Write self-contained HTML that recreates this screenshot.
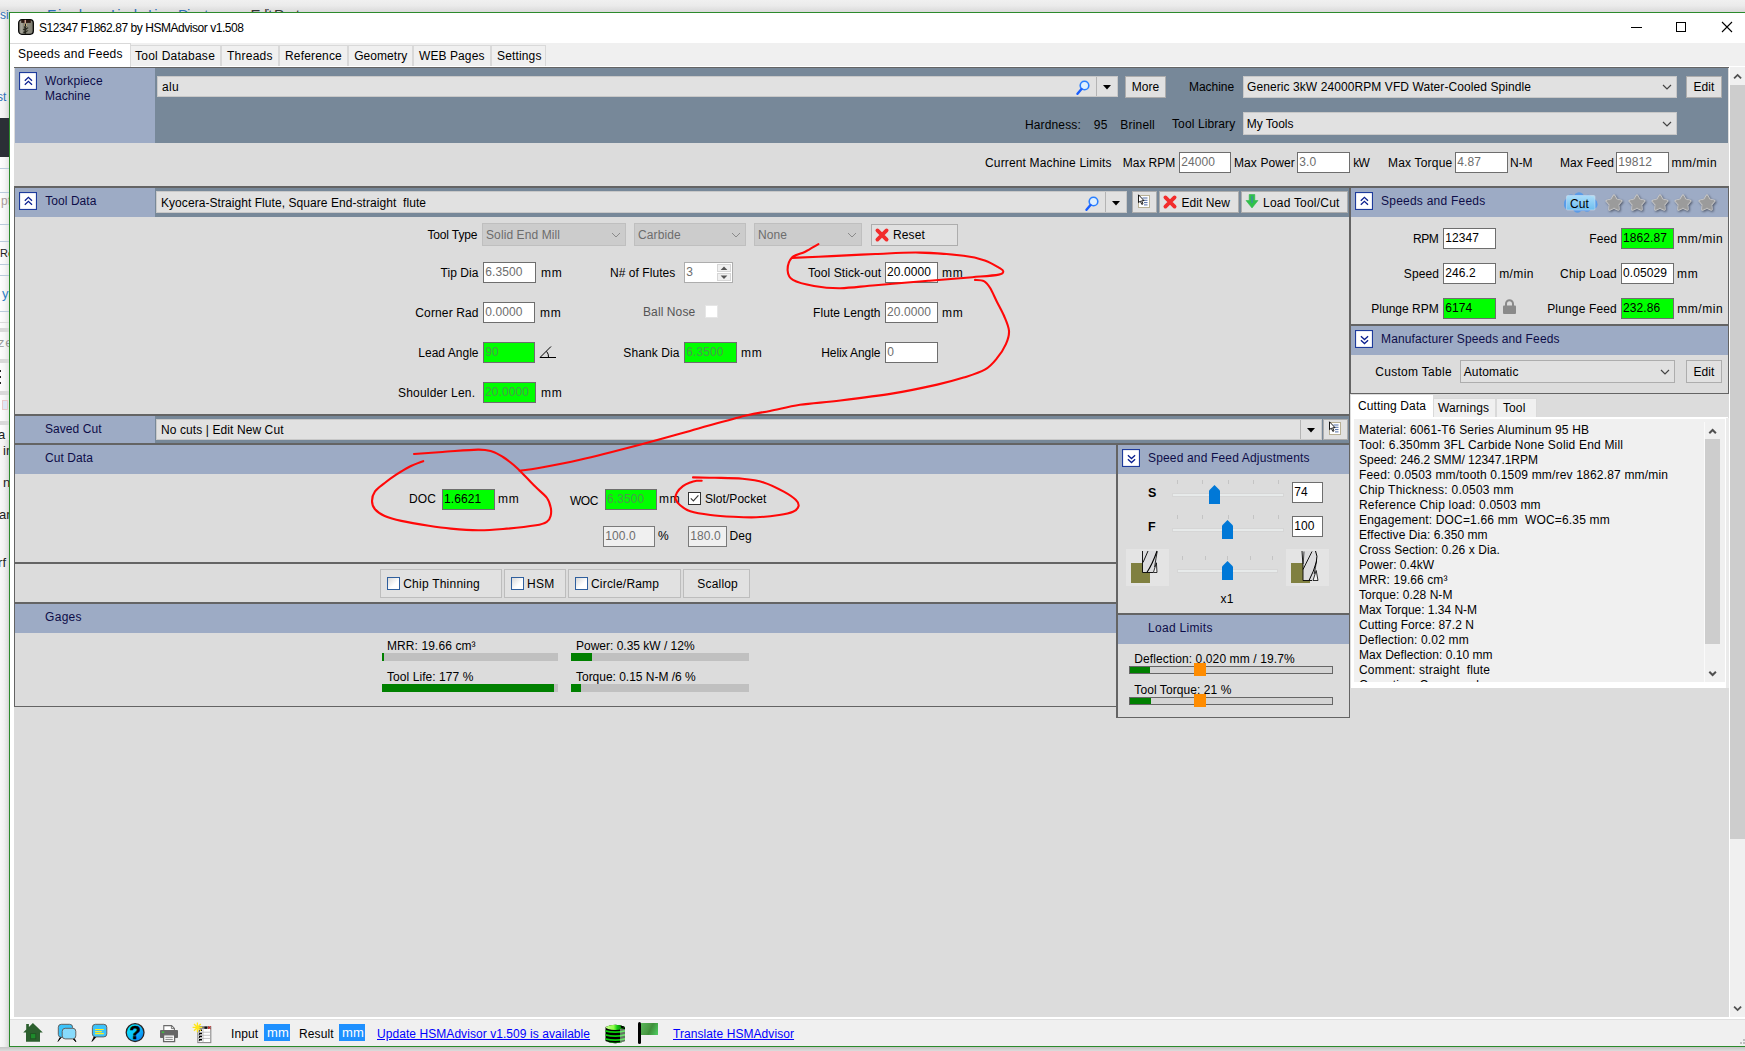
<!DOCTYPE html>
<html><head><meta charset="utf-8"><title>S12347 F1862.87 by HSMAdvisor v1.508</title>
<style>
html,body{margin:0;padding:0;}
body{width:1745px;height:1051px;position:relative;overflow:hidden;background:#fff;
 font-family:"Liberation Sans",Arial,sans-serif;font-size:12px;color:#000;}
.b{position:absolute;display:block;}
.t{position:absolute;white-space:pre;line-height:14px;height:14px;letter-spacing:0.1px;}
.t.r{text-align:right;}
.t.c{text-align:center;}
.nv{color:#0d0d48;}
.gr{color:#6d6d6d;}
.lk{color:#0000ff;text-decoration:underline;}
.bd{font-weight:bold;}
</style></head><body>

<div class="b " style="left:0px;top:0px;width:1745px;height:12px;background:linear-gradient(#f0f0f0 0%,#ebebeb 45%,#dadada 100%);"></div>
<div class="b " style="left:0px;top:12px;width:10px;height:1039px;background:#fff;"></div>
<div class="b " style="left:0px;top:12px;width:9px;height:1039px;background:linear-gradient(90deg,#f7f7f7 0%,#f1f1f1 45%,#e2e2e2 80%,#d2d2d2 100%);"></div>
<div class="b " style="left:0px;top:118px;width:9px;height:39px;background:#2b2f36;"></div>
<div class="b " style="left:0px;top:157px;width:9px;height:283px;background:linear-gradient(90deg,#fdfdfd 0%,#f6f6f6 50%,#e4e4e4 100%);"></div>
<div class="b " style="left:0px;top:168px;width:9px;height:1px;background:#b9cadb;"></div>
<div class="b " style="left:0px;top:192px;width:9px;height:1px;background:#b9cadb;"></div>
<div class="b " style="left:0px;top:224px;width:9px;height:1px;background:#b9cadb;"></div>
<div class="b " style="left:0px;top:241px;width:9px;height:1px;background:#b9cadb;"></div>
<div class="b " style="left:0px;top:264px;width:9px;height:1px;background:#b9cadb;"></div>
<div class="b " style="left:0px;top:275px;width:9px;height:1px;background:#b9cadb;"></div>
<div class="b " style="left:0px;top:311px;width:9px;height:1px;background:#b9cadb;"></div>
<div class="b " style="left:0px;top:322px;width:9px;height:1px;background:#dadada;"></div>
<div class="b " style="left:0px;top:328px;width:9px;height:4px;background:#d9d9d9;"></div>
<div class="b " style="left:0px;top:359px;width:9px;height:4px;background:#d9d9d9;"></div>
<div class="b " style="left:0px;top:391px;width:9px;height:4px;background:#d9d9d9;"></div>
<div class="b " style="left:0px;top:421px;width:9px;height:4px;background:#d9d9d9;"></div>
<div class="b " style="left:0px;top:370px;width:1px;height:2px;background:#222;"></div>
<div class="b " style="left:0px;top:376px;width:1px;height:2px;background:#222;"></div>
<div class="b " style="left:0px;top:382px;width:1px;height:2px;background:#222;"></div>
<div class="b " style="left:2px;top:400px;width:6px;height:10px;background:#dfe6f3;border:1px solid #e9c9c9;box-sizing:border-box;"></div>
<div class="t " style="left:0px;top:7.5px;color:#2f6fb5;">si</div>
<div class="t " style="left:-3px;top:90px;color:#2f6fb5;">st</div>
<div class="t " style="left:1px;top:193.5px;color:#a99;">pt</div>
<div class="t " style="left:0px;top:245.7px;font-size:11px;color:#222;">Re</div>
<div class="t " style="left:2px;top:287.0px;font-size:13px;color:#2f7fc5;">ya</div>
<div class="t " style="left:-3px;top:337.2px;font-size:13px;color:#999;font-family:Liberation Mono,monospace;">ze</div>
<div class="t " style="left:-2px;top:427.5px;font-size:13px;color:#222;">a</div>
<div class="t " style="left:3px;top:443.5px;font-size:13px;color:#222;">ir</div>
<div class="t " style="left:3px;top:475.5px;font-size:13px;color:#222;">n</div>
<div class="t " style="left:-1px;top:507.5px;font-size:13px;color:#222;">ar</div>
<div class="t " style="left:-2px;top:555.5px;font-size:13px;color:#222;">rf</div>
<div class="t " style="left:33px;top:8.2px;font-size:11px;color:#999;">▸</div>
<div class="t " style="left:47px;top:8.0px;font-size:15px;letter-spacing:1.938px;color:#2f6fb5;">Find</div>
<div class="t " style="left:95px;top:8.2px;font-size:11px;color:#999;">▸</div>
<div class="t " style="left:111px;top:8.0px;font-size:15px;letter-spacing:-2.142px;color:#2f6fb5;">Line-by-Line</div>
<div class="t " style="left:178px;top:8.0px;font-size:15px;letter-spacing:-1.752px;color:#2f6fb5;">Directory</div>
<div class="t " style="left:238px;top:8.2px;font-size:11px;color:#999;">▸</div>
<div class="t " style="left:250.5px;top:8.0px;font-size:15px;letter-spacing:-1.316px;color:#333;">Edit Post</div>
<div class="b " style="left:0px;top:1047px;width:1745px;height:4px;background:linear-gradient(#c4c4c4,#dcdcdc);"></div>
<div class="b " style="left:9px;top:12px;width:1736px;height:1035px;background:#fff;border-left:1px solid #2c8a2c;border-top:1px solid #2c8a2c;border-bottom:1px solid #2c8a2c;box-sizing:border-box;"></div>
<svg class="b" style="left:18px;top:19px;" width="16" height="16" viewBox="0 0 16 16"><defs><linearGradient id="ti" x1="0" y1="0" x2="1" y2="0"><stop offset="0" stop-color="#8a897e"/><stop offset="0.22" stop-color="#a9a89d"/><stop offset="0.45" stop-color="#5a5a4e"/><stop offset="0.62" stop-color="#8f8e82"/><stop offset="1" stop-color="#7b7a6e"/></linearGradient></defs><rect x="0.7" y="0.7" width="14.6" height="14.6" rx="3.2" fill="url(#ti)" stroke="#050505" stroke-width="1.3"/><rect x="3.2" y="0.9" width="9.6" height="3" fill="#2a1812"/><rect x="6.6" y="0.9" width="1.3" height="3.6" fill="#e2b4a4"/><rect x="5.9" y="4.6" width="3" height="2.6" fill="#c9b77c"/><rect x="6.8" y="4.8" width="1.2" height="2.2" fill="#15152a"/><path d="M6.3 7.8 L9 9 L6.3 10.4 L9 11.8 L6.3 13.2 L8.6 14.4" stroke="#26261c" stroke-width="1.5" fill="none"/><path d="M8.3 8.2 L8.9 8.8 M8.3 11 L8.9 11.6 M8.3 13.8 L8.9 14.3" stroke="#c9c8b8" stroke-width="1"/></svg>
<div class="t ttl" style="left:39px;top:21px;letter-spacing:-0.452px;">S12347 F1862.87 by HSMAdvisor v1.508</div>
<div class="b " style="left:1631px;top:27px;width:11px;height:1px;background:#000;"></div>
<div class="b " style="left:1676px;top:22px;width:10px;height:10px;border:1px solid #000;box-sizing:border-box;"></div>
<svg class="b" style="left:1721px;top:21px;" width="12" height="12" viewBox="0 0 12 12"><path d="M1 1 L11 11 M11 1 L1 11" stroke="#000" stroke-width="1.1"/></svg>
<div class="b " style="left:10px;top:43px;width:1735px;height:23px;background:#f0f0f0;"></div>
<div class="b " style="left:10px;top:66px;width:1735px;height:1px;background:#fff;"></div>
<div class="b " style="left:130px;top:45px;width:91px;height:21px;background:#f0f0f0;border:1px solid #d9d9d9;border-bottom:none;box-sizing:border-box;"></div>
<div class="t " style="left:135px;top:49px;letter-spacing:0.257px;">Tool Database</div>
<div class="b " style="left:221px;top:45px;width:58px;height:21px;background:#f0f0f0;border:1px solid #d9d9d9;border-bottom:none;box-sizing:border-box;"></div>
<div class="t " style="left:227px;top:49px;letter-spacing:0.245px;">Threads</div>
<div class="b " style="left:279px;top:45px;width:69px;height:21px;background:#f0f0f0;border:1px solid #d9d9d9;border-bottom:none;box-sizing:border-box;"></div>
<div class="t " style="left:285px;top:49px;letter-spacing:0.178px;">Reference</div>
<div class="b " style="left:348px;top:45px;width:65px;height:21px;background:#f0f0f0;border:1px solid #d9d9d9;border-bottom:none;box-sizing:border-box;"></div>
<div class="t " style="left:354.2px;top:49px;letter-spacing:0.045px;">Geometry</div>
<div class="b " style="left:413px;top:45px;width:78px;height:21px;background:#f0f0f0;border:1px solid #d9d9d9;border-bottom:none;box-sizing:border-box;"></div>
<div class="t " style="left:419px;top:49px;letter-spacing:0.087px;">WEB Pages</div>
<div class="b " style="left:491px;top:45px;width:55px;height:21px;background:#f0f0f0;border:1px solid #d9d9d9;border-bottom:none;box-sizing:border-box;"></div>
<div class="t " style="left:497px;top:49px;letter-spacing:0.149px;">Settings</div>
<div class="b " style="left:10px;top:43px;width:121px;height:24px;background:#fff;border-top:1px solid #d9d9d9;border-right:1px solid #d9d9d9;box-sizing:border-box;"></div>
<div class="t " style="left:18px;top:47px;letter-spacing:0.250px;">Speeds and Feeds</div>
<div class="b " style="left:14px;top:67px;width:1715px;height:950px;background:#dcdcdc;"></div>
<div class="b " style="left:1729px;top:67px;width:16px;height:950px;background:#f0f0f0;border-left:1px solid #fff;box-sizing:border-box;"></div>
<div class="b " style="left:1730px;top:85px;width:15px;height:754px;background:#cdcdcd;"></div>
<svg class="b" style="left:1732px;top:72px;" width="11" height="8" viewBox="0 0 11 8"><path d="M2.1 6.4 L5.6 2.9 L9.1 6.4" fill="none" stroke="#505050" stroke-width="1.8"/></svg>
<svg class="b" style="left:1732px;top:1005px;" width="11" height="8" viewBox="0 0 11 8"><path d="M2.1 1.6 L5.6 5.1 L9.1 1.6" fill="none" stroke="#505050" stroke-width="1.8"/></svg>
<div class="b " style="left:14px;top:67px;width:1715px;height:1px;background:#646464;"></div>
<div class="b " style="left:15px;top:68px;width:140px;height:75px;background:#9dabc5;"></div>
<div class="b " style="left:155px;top:68px;width:1573px;height:75px;background:#778899;"></div>
<svg class="b" style="left:19px;top:72px;" width="18" height="18" viewBox="0 0 18 18"><rect x="0.5" y="0.5" width="17" height="17" fill="#fff" stroke="#1d3b9c" stroke-width="1.2"/><path d="M5.8 8.7 L9.4 5.3 L13 8.7 M5.8 12.8 L9.4 9.4 L13 12.8" fill="none" stroke="#0a1f8f" stroke-width="1.3"/></svg>
<div class="t nv" style="left:45px;top:74px;letter-spacing:0.154px;">Workpiece</div>
<div class="t nv" style="left:45px;top:89px;letter-spacing:0.007px;">Machine</div>
<div class="b " style="left:157px;top:76px;width:961px;height:21px;background:#e1e1e1;border:1px solid #c8c8c8;box-sizing:border-box;"></div>
<div class="t " style="left:162.1px;top:80px;letter-spacing:0.242px;">alu</div>
<div class="b " style="left:1096px;top:77px;width:1px;height:19px;background:#b4b4b4;"></div>
<svg class="b" style="left:1076px;top:80px;" width="14" height="15" viewBox="0 0 14 15"><circle cx="8.5" cy="5.5" r="4.3" fill="#dff0ff" stroke="#2a7fff" stroke-width="1.6"/><path d="M5.5 9 L1.5 13.8" stroke="#1a5fff" stroke-width="2.4" stroke-linecap="round"/></svg>
<svg class="b" style="left:1103px;top:85px;" width="8" height="5" viewBox="0 0 8 5"><path d="M0 0 L8 0 L4 4.5 Z" fill="#000"/></svg>
<div class="b " style="left:1125px;top:76px;width:41px;height:22px;background:#e1e1e1;border:1px solid #adadad;box-sizing:border-box;"></div>
<div class="t c " style="left:1045.5px;width:200px;top:80px;">More</div>
<div class="t " style="left:1189px;top:80px;letter-spacing:-0.027px;">Machine</div>
<div class="b " style="left:1243px;top:76px;width:434px;height:22px;background:#e1e1e1;border:1px solid #c8c8c8;box-sizing:border-box;"></div>
<div class="t " style="left:1247px;top:80px;letter-spacing:0.083px;">Generic 3kW 24000RPM VFD Water-Cooled Spindle</div>
<svg class="b" style="left:1662.0px;top:84.0px;" width="10" height="6" viewBox="0 0 10 6"><path d="M1 1 L5.0 5 L9 1" fill="none" stroke="#444" stroke-width="1.2"/></svg>
<div class="b " style="left:1686px;top:76px;width:36px;height:22px;background:#e1e1e1;border:1px solid #adadad;box-sizing:border-box;"></div>
<div class="t c " style="left:1604.0px;width:200px;top:80px;">Edit</div>
<div class="t " style="left:1025px;top:118px;letter-spacing:0.137px;">Hardness:</div>
<div class="t " style="left:1093.7px;top:118px;letter-spacing:0.441px;">95</div>
<div class="t " style="left:1120.3px;top:118px;letter-spacing:0.190px;">Brinell</div>
<div class="t " style="left:1172px;top:117px;letter-spacing:0.106px;">Tool Library</div>
<div class="b " style="left:1243px;top:112px;width:434px;height:23px;background:#e1e1e1;border:1px solid #c8c8c8;box-sizing:border-box;"></div>
<div class="t " style="left:1246.8px;top:117px;letter-spacing:-0.077px;">My Tools</div>
<svg class="b" style="left:1662.0px;top:121.0px;" width="10" height="6" viewBox="0 0 10 6"><path d="M1 1 L5.0 5 L9 1" fill="none" stroke="#444" stroke-width="1.2"/></svg>
<div class="t " style="left:985px;top:156px;letter-spacing:0.149px;">Current Machine Limits</div>
<div class="t " style="left:1122.8px;top:156px;letter-spacing:-0.045px;">Max RPM</div>
<div class="b " style="left:1179px;top:152px;width:52px;height:21px;background:#fff;border:1px solid #6e6e6e;box-sizing:border-box;"></div>
<div class="t " style="left:1181.2px;top:155px;color:#6d6d6d;">24000</div>
<div class="t " style="left:1234px;top:156px;letter-spacing:0.096px;">Max Power</div>
<div class="b " style="left:1297px;top:152px;width:53px;height:21px;background:#fff;border:1px solid #6e6e6e;box-sizing:border-box;"></div>
<div class="t " style="left:1299.2px;top:155px;color:#6d6d6d;">3.0</div>
<div class="t " style="left:1353.3px;top:156px;letter-spacing:-0.828px;">kW</div>
<div class="t " style="left:1388px;top:156px;letter-spacing:0.191px;">Max Torque</div>
<div class="b " style="left:1455px;top:152px;width:53px;height:21px;background:#fff;border:1px solid #6e6e6e;box-sizing:border-box;"></div>
<div class="t " style="left:1457.2px;top:155px;color:#6d6d6d;">4.87</div>
<div class="t " style="left:1510px;top:156px;letter-spacing:-0.036px;">N-M</div>
<div class="t " style="left:1560px;top:156px;letter-spacing:0.092px;">Max Feed</div>
<div class="b " style="left:1616px;top:152px;width:53px;height:21px;background:#fff;border:1px solid #6e6e6e;box-sizing:border-box;"></div>
<div class="t " style="left:1618.2px;top:155px;color:#6d6d6d;">19812</div>
<div class="t " style="left:1671.4px;top:156px;letter-spacing:0.526px;">mm/min</div>
<div class="b " style="left:14px;top:186px;width:1715px;height:2px;background:#646464;"></div>
<div class="b " style="left:14px;top:188px;width:1px;height:519px;background:#646464;"></div>
<div class="b " style="left:15px;top:188px;width:140px;height:29px;background:#9dabc5;"></div>
<div class="b " style="left:155px;top:188px;width:1194px;height:29px;background:#778899;"></div>
<svg class="b" style="left:19px;top:192px;" width="18" height="18" viewBox="0 0 18 18"><rect x="0.5" y="0.5" width="17" height="17" fill="#fff" stroke="#1d3b9c" stroke-width="1.2"/><path d="M5.8 8.7 L9.4 5.3 L13 8.7 M5.8 12.8 L9.4 9.4 L13 12.8" fill="none" stroke="#0a1f8f" stroke-width="1.3"/></svg>
<div class="t nv" style="left:45.3px;top:194px;letter-spacing:0.050px;">Tool Data</div>
<div class="b " style="left:156px;top:191px;width:971px;height:22px;background:#e1e1e1;border:1px solid #c8c8c8;box-sizing:border-box;"></div>
<div class="t " style="left:161px;top:196px;letter-spacing:0.058px;">Kyocera-Straight Flute, Square End-straight  flute</div>
<div class="b " style="left:1105px;top:192px;width:1px;height:20px;background:#b4b4b4;"></div>
<svg class="b" style="left:1085px;top:196px;" width="14" height="15" viewBox="0 0 14 15"><circle cx="8.5" cy="5.5" r="4.3" fill="#dff0ff" stroke="#2a7fff" stroke-width="1.6"/><path d="M5.5 9 L1.5 13.8" stroke="#1a5fff" stroke-width="2.4" stroke-linecap="round"/></svg>
<svg class="b" style="left:1112px;top:201px;" width="8" height="5" viewBox="0 0 8 5"><path d="M0 0 L8 0 L4 4.5 Z" fill="#000"/></svg>
<div class="b " style="left:1132px;top:191px;width:25px;height:22px;background:#e1e1e1;border:1px solid #adadad;box-sizing:border-box;"></div>
<svg class="b" style="left:1137px;top:194px;" width="14" height="15" viewBox="0 0 14 15"><rect x="1.5" y="1.5" width="11" height="12" fill="#fff" stroke="#b8b095" stroke-width="1"/><path d="M5.5 4 H10.5 M7 6.3 H10.5 M7 8.6 H10.5 M7 10.9 H10.5" stroke="#3b5b9b" stroke-width="0.9"/><path d="M1.5 0.8 V8.6 L3.3 7.2 L4.8 10.4 L6 9.8 L4.6 6.8 L7 6.6 Z" fill="#fff" stroke="#000" stroke-width="0.9"/></svg>
<div class="b " style="left:1159px;top:191px;width:80px;height:22px;background:#e1e1e1;border:1px solid #adadad;box-sizing:border-box;"></div>
<div class="t " style="left:1181.5px;top:196px;letter-spacing:0.067px;">Edit New</div>
<svg class="b" style="left:1162px;top:194px;" width="16" height="16" viewBox="0 0 16 16"><path d="M3.4 3.4 L12.6 12.6 M12.6 3.4 L3.4 12.6" stroke="#f22c2c" stroke-width="3.8" stroke-linecap="round"/></svg>
<div class="b " style="left:1241px;top:191px;width:107px;height:22px;background:#e1e1e1;border:1px solid #adadad;box-sizing:border-box;"></div>
<div class="t " style="left:1263px;top:196px;letter-spacing:0.213px;">Load Tool/Cut</div>
<svg class="b" style="left:1245px;top:194px;" width="14" height="15" viewBox="0 0 14 15"><path d="M4.2 0.5 H9.8 V6.5 H13 L7 14 L1 6.5 H4.2 Z" fill="#2fc24a" stroke="#36b34f" stroke-width="0.6"/><path d="M6.4 2 H7.6 V9 H6.4 Z" fill="#4b6bd6" opacity="0.75"/></svg>
<div class="b " style="left:1349px;top:188px;width:2px;height:206px;background:#646464;"></div>
<div class="t " style="left:427.4px;top:228px;letter-spacing:-0.132px;">Tool Type</div>
<div class="b " style="left:482px;top:223px;width:144px;height:23px;background:#cccccc;border:1px solid #bfbfbf;box-sizing:border-box;"></div>
<div class="t gr" style="left:486px;top:228px;">Solid End Mill</div>
<svg class="b" style="left:611.0px;top:232.0px;" width="10" height="6" viewBox="0 0 10 6"><path d="M1 1 L5.0 5 L9 1" fill="none" stroke="#8a8a8a" stroke-width="1"/></svg>
<div class="b " style="left:634px;top:223px;width:112px;height:23px;background:#cccccc;border:1px solid #bfbfbf;box-sizing:border-box;"></div>
<div class="t gr" style="left:638px;top:228px;">Carbide</div>
<svg class="b" style="left:731.0px;top:232.0px;" width="10" height="6" viewBox="0 0 10 6"><path d="M1 1 L5.0 5 L9 1" fill="none" stroke="#8a8a8a" stroke-width="1"/></svg>
<div class="b " style="left:754px;top:223px;width:108px;height:23px;background:#cccccc;border:1px solid #bfbfbf;box-sizing:border-box;"></div>
<div class="t gr" style="left:758px;top:228px;">None</div>
<svg class="b" style="left:847.0px;top:232.0px;" width="10" height="6" viewBox="0 0 10 6"><path d="M1 1 L5.0 5 L9 1" fill="none" stroke="#8a8a8a" stroke-width="1"/></svg>
<div class="b " style="left:871px;top:224px;width:87px;height:22px;background:#e1e1e1;border:1px solid #adadad;box-sizing:border-box;background:#e1e1e1;"></div>
<div class="t " style="left:893px;top:228px;">Reset</div>
<svg class="b" style="left:874px;top:227px;" width="16" height="16" viewBox="0 0 16 16"><path d="M3.4 3.4 L12.6 12.6 M12.6 3.4 L3.4 12.6" stroke="#f22c2c" stroke-width="3.8" stroke-linecap="round"/></svg>
<div class="t " style="left:440.5px;top:266px;letter-spacing:0.070px;">Tip Dia</div>
<div class="b " style="left:483px;top:262px;width:53px;height:21px;background:#fff;border:1px solid #6e6e6e;box-sizing:border-box;"></div>
<div class="t " style="left:485.2px;top:265px;color:#6d6d6d;">6.3500</div>
<div class="t " style="left:541px;top:266px;letter-spacing:0.800px;">mm</div>
<div class="t " style="left:610px;top:266px;letter-spacing:0.054px;">N# of Flutes</div>
<div class="b " style="left:684px;top:262px;width:49px;height:21px;background:#fff;border:1px solid #adadad;box-sizing:border-box;"></div>
<div class="t " style="left:686.2px;top:265px;color:#6d6d6d;">3</div>
<div class="b " style="left:717px;top:264px;width:14px;height:8px;background:#f0f0f0;border:1px solid #d6d6d6;box-sizing:border-box;"></div>
<div class="b " style="left:717px;top:273px;width:14px;height:8px;background:#f0f0f0;border:1px solid #d6d6d6;box-sizing:border-box;"></div>
<svg class="b" style="left:720px;top:266px;" width="8" height="5" viewBox="0 0 8 5"><path d="M0.6 4 L4 0.6 L7.4 4 Z" fill="#555"/></svg>
<svg class="b" style="left:720px;top:275px;" width="8" height="5" viewBox="0 0 8 5"><path d="M0.6 0.6 L4 4 L7.4 0.6 Z" fill="#555"/></svg>
<div class="t " style="left:808px;top:266px;letter-spacing:0.075px;">Tool Stick-out</div>
<div class="b " style="left:885px;top:262px;width:53px;height:21px;background:#fff;border:1px solid #6e6e6e;box-sizing:border-box;"></div>
<div class="t " style="left:887px;top:265px;color:#000;">20.0000</div>
<div class="t " style="left:942px;top:266px;letter-spacing:0.800px;">mm</div>
<div class="t " style="left:415.3px;top:306px;letter-spacing:0.130px;">Corner Rad</div>
<div class="b " style="left:483px;top:302px;width:52px;height:21px;background:#fff;border:1px solid #6e6e6e;box-sizing:border-box;"></div>
<div class="t " style="left:485.2px;top:305px;color:#6d6d6d;">0.0000</div>
<div class="t " style="left:540px;top:306px;letter-spacing:0.800px;">mm</div>
<div class="t " style="left:643px;top:305px;color:#555;">Ball Nose</div>
<div class="b " style="left:705px;top:305px;width:13px;height:13px;background:#fff;border:1px solid #e6e6e6;box-sizing:border-box;"></div>
<div class="t " style="left:813px;top:306px;letter-spacing:0.071px;">Flute Length</div>
<div class="b " style="left:885px;top:302px;width:53px;height:21px;background:#fff;border:1px solid #6e6e6e;box-sizing:border-box;"></div>
<div class="t " style="left:887px;top:305px;color:#6d6d6d;">20.0000</div>
<div class="t " style="left:942px;top:306px;letter-spacing:0.800px;">mm</div>
<div class="t " style="left:418.3px;top:346px;letter-spacing:0.015px;">Lead Angle</div>
<div class="b " style="left:483px;top:342px;width:52px;height:21px;background:#00ff00;border:1px solid #6e6e6e;box-sizing:border-box;"></div>
<div class="t " style="left:485.2px;top:345px;color:#4b9b4b;">90</div>
<svg class="b" style="left:539px;top:345px;" width="18" height="14" viewBox="0 0 18 14"><path d="M1 12.5 H17 M1 12.5 L12 1.5" stroke="#000" stroke-width="1" fill="none"/><path d="M9.5 12.5 A8 8 0 0 0 7.6 6.4" stroke="#000" stroke-width="1" fill="none"/></svg>
<div class="t " style="left:623.3px;top:346px;letter-spacing:0.103px;">Shank Dia</div>
<div class="b " style="left:684px;top:342px;width:53px;height:21px;background:#00ff00;border:1px solid #6e6e6e;box-sizing:border-box;"></div>
<div class="t " style="left:686.2px;top:345px;color:#4b9b4b;">6.3500</div>
<div class="t " style="left:741px;top:346px;letter-spacing:0.800px;">mm</div>
<div class="t " style="left:821.2px;top:346px;letter-spacing:-0.075px;">Helix Angle</div>
<div class="b " style="left:885px;top:342px;width:53px;height:21px;background:#fff;border:1px solid #6e6e6e;box-sizing:border-box;"></div>
<div class="t " style="left:887.2px;top:345px;color:#6d6d6d;">0</div>
<div class="t " style="left:398px;top:386px;letter-spacing:0.189px;">Shoulder Len.</div>
<div class="b " style="left:483px;top:382px;width:53px;height:21px;background:#00ff00;border:1px solid #6e6e6e;box-sizing:border-box;"></div>
<div class="t " style="left:485px;top:385px;color:#4b9b4b;">20.0000</div>
<div class="t " style="left:541px;top:386px;letter-spacing:0.800px;">mm</div>
<div class="b " style="left:14px;top:414px;width:1336px;height:2px;background:#646464;"></div>
<div class="b " style="left:15px;top:416px;width:140px;height:27px;background:#9dabc5;"></div>
<div class="b " style="left:155px;top:416px;width:1194px;height:27px;background:#778899;"></div>
<div class="t nv" style="left:45px;top:422px;letter-spacing:0.057px;">Saved Cut</div>
<div class="b " style="left:156px;top:419px;width:1166px;height:21px;background:#e1e1e1;border:1px solid #c8c8c8;box-sizing:border-box;"></div>
<div class="t " style="left:161px;top:423px;letter-spacing:0.095px;">No cuts | Edit New Cut</div>
<div class="b " style="left:1300px;top:420px;width:1px;height:19px;background:#b4b4b4;"></div>
<svg class="b" style="left:1307px;top:428px;" width="8" height="5" viewBox="0 0 8 5"><path d="M0 0 L8 0 L4 4.5 Z" fill="#000"/></svg>
<div class="b " style="left:1323px;top:419px;width:25px;height:21px;background:#e1e1e1;border:1px solid #adadad;box-sizing:border-box;"></div>
<svg class="b" style="left:1328px;top:421px;" width="14" height="15" viewBox="0 0 14 15"><rect x="1.5" y="1.5" width="11" height="12" fill="#fff" stroke="#b8b095" stroke-width="1"/><path d="M5.5 4 H10.5 M7 6.3 H10.5 M7 8.6 H10.5 M7 10.9 H10.5" stroke="#3b5b9b" stroke-width="0.9"/><path d="M1.5 0.8 V8.6 L3.3 7.2 L4.8 10.4 L6 9.8 L4.6 6.8 L7 6.6 Z" fill="#fff" stroke="#000" stroke-width="0.9"/></svg>
<div class="b " style="left:14px;top:443px;width:1336px;height:2px;background:#646464;"></div>
<div class="b " style="left:15px;top:445px;width:1101px;height:29px;background:#9dabc5;"></div>
<div class="t nv" style="left:45px;top:451px;letter-spacing:0.077px;">Cut Data</div>
<div class="t r " style="right:1309px;top:492px;">DOC</div>
<div class="b " style="left:442px;top:489px;width:53px;height:21px;background:#00ff00;border:1px solid #6e6e6e;box-sizing:border-box;"></div>
<div class="t " style="left:444px;top:492px;color:#000;">1.6621</div>
<div class="t " style="left:498px;top:492px;letter-spacing:0.800px;">mm</div>
<div class="t " style="left:570px;top:494px;letter-spacing:-0.514px;">WOC</div>
<div class="b " style="left:605px;top:489px;width:52px;height:21px;background:#00ff00;border:1px solid #6e6e6e;box-sizing:border-box;"></div>
<div class="t " style="left:607px;top:492px;color:#4b9b4b;">6.3500</div>
<div class="t " style="left:659px;top:492px;letter-spacing:0.800px;">mm</div>
<div class="b " style="left:688px;top:492px;width:13px;height:13px;background:#fff;border:1px solid #333;box-sizing:border-box;"></div>
<svg class="b" style="left:689px;top:493px;" width="11" height="11" viewBox="0 0 11 11"><path d="M1.8 5.4 L4.4 8 L9.4 2.4" fill="none" stroke="#3a3a3a" stroke-width="1.15"/></svg>
<div class="t " style="left:705px;top:492px;letter-spacing:0.060px;">Slot/Pocket</div>
<div class="b " style="left:603px;top:526px;width:52px;height:21px;background:#f0f0f0;border:1px solid #7a7a7a;box-sizing:border-box;"></div>
<div class="t " style="left:605.2px;top:529px;color:#6d6d6d;">100.0</div>
<div class="t " style="left:658px;top:529px;">%</div>
<div class="b " style="left:688px;top:526px;width:39px;height:21px;background:#f0f0f0;border:1px solid #7a7a7a;box-sizing:border-box;"></div>
<div class="t " style="left:690.2px;top:529px;color:#6d6d6d;">180.0</div>
<div class="t " style="left:729.5px;top:529px;letter-spacing:0.042px;">Deg</div>
<div class="b " style="left:14px;top:562px;width:1103px;height:2px;background:#646464;"></div>
<div class="b " style="left:380px;top:569px;width:122px;height:29px;background:#e1e1e1;border:1px solid #bdbdbd;box-sizing:border-box;"></div>
<div class="b " style="left:387px;top:577px;width:13px;height:13px;background:linear-gradient(135deg,#d8d8d8,#fff 60%);border:1px solid #2f5f9e;box-sizing:border-box;"></div>
<div class="t " style="left:403.2px;top:577px;letter-spacing:0.231px;">Chip Thinning</div>
<div class="b " style="left:504px;top:569px;width:62px;height:29px;background:#e1e1e1;border:1px solid #bdbdbd;box-sizing:border-box;"></div>
<div class="b " style="left:511px;top:577px;width:13px;height:13px;background:linear-gradient(135deg,#d8d8d8,#fff 60%);border:1px solid #2f5f9e;box-sizing:border-box;"></div>
<div class="t " style="left:527px;top:577px;letter-spacing:0.264px;">HSM</div>
<div class="b " style="left:568px;top:569px;width:113px;height:29px;background:#e1e1e1;border:1px solid #bdbdbd;box-sizing:border-box;"></div>
<div class="b " style="left:575px;top:577px;width:13px;height:13px;background:linear-gradient(135deg,#d8d8d8,#fff 60%);border:1px solid #2f5f9e;box-sizing:border-box;"></div>
<div class="t " style="left:591px;top:577px;letter-spacing:0.198px;">Circle/Ramp</div>
<div class="b " style="left:683px;top:569px;width:67px;height:29px;background:#e1e1e1;border:1px solid #bdbdbd;box-sizing:border-box;"></div>
<div class="t " style="left:697.3px;top:577px;letter-spacing:0.190px;">Scallop</div>
<div class="b " style="left:14px;top:602px;width:1103px;height:2px;background:#646464;"></div>
<div class="b " style="left:15px;top:604px;width:1101px;height:29px;background:#9dabc5;"></div>
<div class="t nv" style="left:45px;top:610px;letter-spacing:0.310px;">Gages</div>
<div class="b " style="left:382px;top:653px;width:176px;height:8px;background:#c0c0c0;"></div>
<div class="b " style="left:382px;top:653px;width:2px;height:8px;background:#008000;"></div>
<div class="t " style="left:387px;top:639px;letter-spacing:0.095px;">MRR: 19.66 cm³</div>
<div class="b " style="left:571px;top:653px;width:178px;height:8px;background:#c0c0c0;"></div>
<div class="b " style="left:571px;top:653px;width:21px;height:8px;background:#008000;"></div>
<div class="t " style="left:576px;top:639px;letter-spacing:-0.006px;">Power: 0.35 kW / 12%</div>
<div class="b " style="left:382px;top:684px;width:176px;height:8px;background:#c0c0c0;"></div>
<div class="b " style="left:382px;top:684px;width:172px;height:8px;background:#008000;"></div>
<div class="t " style="left:387px;top:670px;letter-spacing:0.067px;">Tool Life: 177 %</div>
<div class="b " style="left:571px;top:684px;width:178px;height:8px;background:#c0c0c0;"></div>
<div class="b " style="left:571px;top:684px;width:10px;height:8px;background:#008000;"></div>
<div class="t " style="left:576px;top:670px;letter-spacing:-0.018px;">Torque: 0.15 N-M /6 %</div>
<div class="b " style="left:14px;top:706px;width:1103px;height:1px;background:#646464;"></div>
<div class="b " style="left:1116px;top:445px;width:2px;height:273px;background:#646464;"></div>
<div class="b " style="left:1349px;top:394px;width:1px;height:324px;background:#646464;"></div>
<div class="b " style="left:1118px;top:445px;width:231px;height:29px;background:#9dabc5;"></div>
<svg class="b" style="left:1122px;top:449px;" width="18" height="18" viewBox="0 0 18 18"><rect x="0.5" y="0.5" width="17" height="17" fill="#fff" stroke="#1d3b9c" stroke-width="1.2"/><path d="M5.9 6.3 L9.5 9.6 L13.1 6.3 M5.9 10.3 L9.5 13.6 L13.1 10.3" fill="none" stroke="#0a1f8f" stroke-width="1.3"/></svg>
<div class="t nv" style="left:1148px;top:451px;letter-spacing:0.162px;">Speed and Feed Adjustments</div>
<div class="t " style="left:1148px;top:485.7px;font-weight:bold;font-size:12.5px;">S</div>
<div class="b " style="left:1173px;top:494px;width:110px;height:2px;background:#e7eaea;border:1px solid #d6d6d6;box-sizing:content-box;margin:-1px 0 0 -1px;"></div>
<div class="b " style="left:1177px;top:480px;width:1px;height:4px;background:#c4c4c4;"></div>
<div class="b " style="left:1202px;top:480px;width:1px;height:4px;background:#c4c4c4;"></div>
<div class="b " style="left:1228px;top:480px;width:1px;height:4px;background:#c4c4c4;"></div>
<div class="b " style="left:1253px;top:480px;width:1px;height:4px;background:#c4c4c4;"></div>
<div class="b " style="left:1278px;top:480px;width:1px;height:4px;background:#c4c4c4;"></div>
<svg class="b" style="left:1209px;top:485px;" width="11" height="19" viewBox="0 0 11 19"><path d="M0 5.5 L5.5 0 L11 5.5 L11 19 L0 19 Z" fill="#0078d7"/></svg>
<div class="b " style="left:1292px;top:482px;width:31px;height:21px;background:#fff;border:1px solid #6e6e6e;box-sizing:border-box;"></div>
<div class="t " style="left:1294.2px;top:485px;color:#000;">74</div>
<div class="t " style="left:1148px;top:519.7px;font-weight:bold;font-size:12.5px;">F</div>
<div class="b " style="left:1173px;top:529px;width:110px;height:2px;background:#e7eaea;border:1px solid #d6d6d6;box-sizing:content-box;margin:-1px 0 0 -1px;"></div>
<div class="b " style="left:1177px;top:515px;width:1px;height:4px;background:#c4c4c4;"></div>
<div class="b " style="left:1202px;top:515px;width:1px;height:4px;background:#c4c4c4;"></div>
<div class="b " style="left:1228px;top:515px;width:1px;height:4px;background:#c4c4c4;"></div>
<div class="b " style="left:1253px;top:515px;width:1px;height:4px;background:#c4c4c4;"></div>
<div class="b " style="left:1278px;top:515px;width:1px;height:4px;background:#c4c4c4;"></div>
<svg class="b" style="left:1222px;top:520px;" width="11" height="19" viewBox="0 0 11 19"><path d="M0 5.5 L5.5 0 L11 5.5 L11 19 L0 19 Z" fill="#0078d7"/></svg>
<div class="b " style="left:1292px;top:516px;width:31px;height:21px;background:#fff;border:1px solid #6e6e6e;box-sizing:border-box;"></div>
<div class="t " style="left:1294.2px;top:519px;color:#000;">100</div>
<div class="b " style="left:1126px;top:549px;width:43px;height:37px;background:#e4e4e4;"></div>
<div class="b " style="left:1131px;top:563px;width:19px;height:20px;background:#808040;"></div>
<svg class="b" style="left:1141px;top:550px;" width="18" height="24" viewBox="0 0 18 24"><path d="M1.5 1 V22.5 H16 V1 Z" fill="#dcdcde" stroke="none"/><path d="M12.4 22.5 L15.4 12.8 L16 22.5 Z" fill="#f6f6f6" stroke="#000" stroke-width="0.8"/><path d="M1.5 1 V22.5 H12" fill="none" stroke="#000" stroke-width="0.9"/><path d="M7 1 L2 12.5" fill="none" stroke="#000" stroke-width="0.9"/><path d="M16 1 Q11.5 14 6 22.3" fill="none" stroke="#000" stroke-width="1.1"/><path d="M16.2 1.5 Q15 8 13.6 17" fill="none" stroke="#000" stroke-width="0.8"/></svg>
<div class="b " style="left:1286px;top:549px;width:43px;height:37px;background:#e4e4e4;"></div>
<div class="b " style="left:1291px;top:563px;width:19px;height:20px;background:#808040;"></div>
<svg class="b" style="left:1301px;top:550px;" width="19" height="32" viewBox="0 0 19 32"><path d="M1 1 L2 16 V30.5 H17 L15.5 20 Q16 10 15.5 1 Z" fill="#dcdcde" stroke="none"/><path d="M12 30.5 L15.2 20.5 L17 30.5 Z" fill="#f6f6f6" stroke="#000" stroke-width="0.8"/><path d="M1 1 L2 16 V30.5 H11" fill="none" stroke="#000" stroke-width="0.9"/><path d="M3 1.5 L2.2 14" fill="none" stroke="#000" stroke-width="0.7"/><path d="M11 1.5 L2 19.5" fill="none" stroke="#000" stroke-width="0.9"/><path d="M14.5 1 Q17 6 15.3 12 Q13 21 8 30.5" fill="none" stroke="#000" stroke-width="1"/><path d="M15.5 11 Q14.5 17 13.2 24" fill="none" stroke="#000" stroke-width="0.8"/></svg>
<div class="b " style="left:1178px;top:570px;width:99px;height:2px;background:#e7eaea;border:1px solid #d6d6d6;box-sizing:content-box;margin:-1px 0 0 -1px;"></div>
<div class="b " style="left:1182px;top:556px;width:1px;height:4px;background:#c4c4c4;"></div>
<div class="b " style="left:1205px;top:556px;width:1px;height:4px;background:#c4c4c4;"></div>
<div class="b " style="left:1227px;top:556px;width:1px;height:4px;background:#c4c4c4;"></div>
<div class="b " style="left:1250px;top:556px;width:1px;height:4px;background:#c4c4c4;"></div>
<div class="b " style="left:1272px;top:556px;width:1px;height:4px;background:#c4c4c4;"></div>
<svg class="b" style="left:1222px;top:561px;" width="11" height="19" viewBox="0 0 11 19"><path d="M0 5.5 L5.5 0 L11 5.5 L11 19 L0 19 Z" fill="#0078d7"/></svg>
<div class="t c " style="left:1127px;width:200px;top:592px;">x1</div>
<div class="b " style="left:1118px;top:613px;width:231px;height:2px;background:#646464;"></div>
<div class="b " style="left:1118px;top:615px;width:231px;height:29px;background:#9dabc5;"></div>
<div class="t nv" style="left:1148px;top:621px;letter-spacing:0.312px;">Load Limits</div>
<div class="b " style="left:1129px;top:666px;width:204px;height:8px;background:#d4d4d4;border:1px solid #666;box-sizing:border-box;"></div>
<div class="b " style="left:1130px;top:667px;width:20px;height:6px;background:#008000;"></div>
<div class="t " style="left:1134.3px;top:652px;letter-spacing:0.107px;">Deflection: 0.020 mm / 19.7%</div>
<div class="b " style="left:1194px;top:663px;width:12px;height:13px;background:#ff8c00;"></div>
<div class="b " style="left:1129px;top:697px;width:204px;height:8px;background:#d4d4d4;border:1px solid #666;box-sizing:border-box;"></div>
<div class="b " style="left:1130px;top:698px;width:21px;height:6px;background:#008000;"></div>
<div class="t " style="left:1134.3px;top:683px;letter-spacing:0.079px;">Tool Torque: 21 %</div>
<div class="b " style="left:1194px;top:694px;width:12px;height:13px;background:#ff8c00;"></div>
<div class="b " style="left:1116px;top:717px;width:234px;height:1px;background:#646464;"></div>
<div class="b " style="left:1351px;top:188px;width:377px;height:29px;background:#9dabc5;"></div>
<div class="b " style="left:1728px;top:186px;width:1px;height:208px;background:#646464;"></div>
<svg class="b" style="left:1355px;top:192px;" width="18" height="18" viewBox="0 0 18 18"><rect x="0.5" y="0.5" width="17" height="17" fill="#fff" stroke="#1d3b9c" stroke-width="1.2"/><path d="M5.8 8.7 L9.4 5.3 L13 8.7 M5.8 12.8 L9.4 9.4 L13 12.8" fill="none" stroke="#0a1f8f" stroke-width="1.3"/></svg>
<div class="t nv" style="left:1381px;top:194px;letter-spacing:0.230px;">Speeds and Feeds</div>
<svg class="b" style="left:1560px;top:188px;" width="42" height="28" viewBox="0 0 42 28"><defs><linearGradient id="cg" x1="0" y1="0" x2="0" y2="1"><stop offset="0" stop-color="#b4e4fb"/><stop offset="1" stop-color="#6ec2f1"/></linearGradient></defs><g fill="#5a9ce8"><ellipse cx="20.5" cy="15" rx="16.5" ry="8"/><circle cx="19" cy="9.5" r="5.2"/><circle cx="11" cy="11" r="4.5"/><circle cx="28" cy="11" r="4.2"/><circle cx="17.5" cy="20.5" r="4.2"/><circle cx="27" cy="19.5" r="4.2"/><circle cx="33" cy="16.5" r="4.6"/><circle cx="8.5" cy="17" r="4.6"/></g><rect x="6.5" y="7.5" width="28.5" height="14.5" rx="1.5" fill="url(#cg)" opacity="0.9"/><rect x="6.5" y="7.5" width="28.5" height="14.5" rx="1" fill="none" stroke="#cfe0f2" stroke-width="0.7" opacity="0.8"/></svg>
<div class="t " style="left:1570px;top:197px;">Cut</div>
<svg class="b" style="left:1601px;top:190px;filter:drop-shadow(1.6px 1.8px 1.1px rgba(55,60,75,0.75));" width="30" height="30" viewBox="0 0 30 30"><polygon points="13.00,5.70 15.53,9.82 20.23,10.95 17.09,14.63 17.47,19.45 13.00,17.60 8.53,19.45 8.91,14.63 5.77,10.95 10.47,9.82" fill="#c9c9c9" stroke="#c9c9c9" stroke-width="2.6" stroke-linejoin="round"/><polygon points="13.00,5.70 15.53,9.82 20.23,10.95 17.09,14.63 17.47,19.45 13.00,17.60 8.53,19.45 8.91,14.63 5.77,10.95 10.47,9.82" fill="#9b9b9b" stroke="#9b9b9b" stroke-width="0.9" stroke-linejoin="round"/></svg>
<svg class="b" style="left:1624px;top:190px;filter:drop-shadow(1.6px 1.8px 1.1px rgba(55,60,75,0.75));" width="30" height="30" viewBox="0 0 30 30"><polygon points="13.00,5.70 15.53,9.82 20.23,10.95 17.09,14.63 17.47,19.45 13.00,17.60 8.53,19.45 8.91,14.63 5.77,10.95 10.47,9.82" fill="#c9c9c9" stroke="#c9c9c9" stroke-width="2.6" stroke-linejoin="round"/><polygon points="13.00,5.70 15.53,9.82 20.23,10.95 17.09,14.63 17.47,19.45 13.00,17.60 8.53,19.45 8.91,14.63 5.77,10.95 10.47,9.82" fill="#9b9b9b" stroke="#9b9b9b" stroke-width="0.9" stroke-linejoin="round"/></svg>
<svg class="b" style="left:1647px;top:190px;filter:drop-shadow(1.6px 1.8px 1.1px rgba(55,60,75,0.75));" width="30" height="30" viewBox="0 0 30 30"><polygon points="13.00,5.70 15.53,9.82 20.23,10.95 17.09,14.63 17.47,19.45 13.00,17.60 8.53,19.45 8.91,14.63 5.77,10.95 10.47,9.82" fill="#c9c9c9" stroke="#c9c9c9" stroke-width="2.6" stroke-linejoin="round"/><polygon points="13.00,5.70 15.53,9.82 20.23,10.95 17.09,14.63 17.47,19.45 13.00,17.60 8.53,19.45 8.91,14.63 5.77,10.95 10.47,9.82" fill="#9b9b9b" stroke="#9b9b9b" stroke-width="0.9" stroke-linejoin="round"/></svg>
<svg class="b" style="left:1670px;top:190px;filter:drop-shadow(1.6px 1.8px 1.1px rgba(55,60,75,0.75));" width="30" height="30" viewBox="0 0 30 30"><polygon points="13.00,5.70 15.53,9.82 20.23,10.95 17.09,14.63 17.47,19.45 13.00,17.60 8.53,19.45 8.91,14.63 5.77,10.95 10.47,9.82" fill="#c9c9c9" stroke="#c9c9c9" stroke-width="2.6" stroke-linejoin="round"/><polygon points="13.00,5.70 15.53,9.82 20.23,10.95 17.09,14.63 17.47,19.45 13.00,17.60 8.53,19.45 8.91,14.63 5.77,10.95 10.47,9.82" fill="#9b9b9b" stroke="#9b9b9b" stroke-width="0.9" stroke-linejoin="round"/></svg>
<svg class="b" style="left:1694px;top:190px;filter:drop-shadow(1.6px 1.8px 1.1px rgba(55,60,75,0.75));" width="30" height="30" viewBox="0 0 30 30"><polygon points="13.00,5.70 15.53,9.82 20.23,10.95 17.09,14.63 17.47,19.45 13.00,17.60 8.53,19.45 8.91,14.63 5.77,10.95 10.47,9.82" fill="#c9c9c9" stroke="#c9c9c9" stroke-width="2.6" stroke-linejoin="round"/><polygon points="13.00,5.70 15.53,9.82 20.23,10.95 17.09,14.63 17.47,19.45 13.00,17.60 8.53,19.45 8.91,14.63 5.77,10.95 10.47,9.82" fill="#9b9b9b" stroke="#9b9b9b" stroke-width="0.9" stroke-linejoin="round"/></svg>
<div class="t " style="left:1413px;top:232px;letter-spacing:-0.436px;">RPM</div>
<div class="b " style="left:1443px;top:228px;width:53px;height:21px;background:#fff;border:1px solid #6e6e6e;box-sizing:border-box;"></div>
<div class="t " style="left:1445.2px;top:231px;color:#000;">12347</div>
<div class="t r " style="right:128px;top:232px;">Feed</div>
<div class="b " style="left:1621px;top:228px;width:53px;height:21px;background:#00ff00;border:1px solid #6e6e6e;box-sizing:border-box;"></div>
<div class="t " style="left:1623px;top:231px;color:#000;">1862.87</div>
<div class="t " style="left:1677.2px;top:232px;letter-spacing:0.546px;">mm/min</div>
<div class="t r " style="right:306px;top:267px;">Speed</div>
<div class="b " style="left:1443px;top:263px;width:53px;height:21px;background:#fff;border:1px solid #6e6e6e;box-sizing:border-box;"></div>
<div class="t " style="left:1445.2px;top:266px;color:#000;">246.2</div>
<div class="t " style="left:1499.2px;top:267px;letter-spacing:0.407px;">m/min</div>
<div class="t " style="left:1560px;top:267px;letter-spacing:0.260px;">Chip Load</div>
<div class="b " style="left:1621px;top:263px;width:53px;height:21px;background:#fff;border:1px solid #6e6e6e;box-sizing:border-box;"></div>
<div class="t " style="left:1623px;top:266px;color:#000;">0.05029</div>
<div class="t " style="left:1677px;top:267px;letter-spacing:0.800px;">mm</div>
<div class="t " style="left:1371.3px;top:302px;letter-spacing:0.014px;">Plunge RPM</div>
<div class="b " style="left:1443px;top:298px;width:53px;height:21px;background:#00ff00;border:1px solid #6e6e6e;box-sizing:border-box;"></div>
<div class="t " style="left:1445.2px;top:301px;color:#000;">6174</div>
<svg class="b" style="left:1502px;top:299px;" width="15" height="16" viewBox="0 0 15 16"><path d="M4 7 V4.8 A3.5 3.5 0 0 1 11 4.8 V7" fill="none" stroke="#8a8a8a" stroke-width="2"/><rect x="1" y="6.5" width="13" height="8.5" rx="1" fill="#8a8a8a"/></svg>
<div class="t " style="left:1547.2px;top:302px;letter-spacing:0.154px;">Plunge Feed</div>
<div class="b " style="left:1621px;top:298px;width:53px;height:21px;background:#00ff00;border:1px solid #6e6e6e;box-sizing:border-box;"></div>
<div class="t " style="left:1623px;top:301px;color:#000;">232.86</div>
<div class="t " style="left:1677.2px;top:302px;letter-spacing:0.546px;">mm/min</div>
<div class="b " style="left:1351px;top:324px;width:377px;height:2px;background:#646464;"></div>
<div class="b " style="left:1351px;top:326px;width:377px;height:29px;background:#9dabc5;"></div>
<svg class="b" style="left:1355px;top:330px;" width="18" height="18" viewBox="0 0 18 18"><rect x="0.5" y="0.5" width="17" height="17" fill="#fff" stroke="#1d3b9c" stroke-width="1.2"/><path d="M5.9 6.3 L9.5 9.6 L13.1 6.3 M5.9 10.3 L9.5 13.6 L13.1 10.3" fill="none" stroke="#0a1f8f" stroke-width="1.3"/></svg>
<div class="t nv" style="left:1381px;top:332px;letter-spacing:0.133px;">Manufacturer Speeds and Feeds</div>
<div class="t " style="left:1375.3px;top:365px;letter-spacing:0.286px;">Custom Table</div>
<div class="b " style="left:1460px;top:360px;width:215px;height:23px;background:#e1e1e1;border:1px solid #adadad;box-sizing:border-box;"></div>
<div class="t " style="left:1463.7px;top:365px;letter-spacing:0.168px;">Automatic</div>
<svg class="b" style="left:1660.0px;top:369.0px;" width="10" height="6" viewBox="0 0 10 6"><path d="M1 1 L5.0 5 L9 1" fill="none" stroke="#444" stroke-width="1.2"/></svg>
<div class="b " style="left:1686px;top:360px;width:36px;height:23px;background:#e1e1e1;border:1px solid #adadad;box-sizing:border-box;"></div>
<div class="t c " style="left:1604.0px;width:200px;top:365px;">Edit</div>
<div class="b " style="left:1351px;top:393px;width:378px;height:1px;background:#646464;"></div>
<div class="b " style="left:1351px;top:394px;width:377px;height:24px;background:#dcdcdc;"></div>
<div class="b " style="left:1433px;top:398px;width:63px;height:20px;background:#f0f0f0;border:1px solid #d9d9d9;border-bottom:none;box-sizing:border-box;"></div>
<div class="t " style="left:1438px;top:401px;">Warnings</div>
<div class="b " style="left:1496px;top:398px;width:41px;height:20px;background:#f0f0f0;border:1px solid #d9d9d9;border-bottom:none;box-sizing:border-box;"></div>
<div class="t " style="left:1503px;top:401px;">Tool</div>
<div class="b " style="left:1351px;top:417px;width:377px;height:271px;background:#fff;"></div>
<div class="b " style="left:1351px;top:395px;width:82px;height:23px;background:#fff;"></div>
<div class="t " style="left:1358px;top:399px;letter-spacing:0.118px;">Cutting Data</div>
<div class="b " style="left:1354px;top:419px;width:371px;height:263px;background:#f0f0f0;overflow:hidden;"></div>
<div class="b " style="left:1726px;top:418px;width:3px;height:270px;background:#ebebeb;"></div>
<div class="t " style="left:1359px;top:423px;letter-spacing:0.155px;">Material: 6061-T6 Series Aluminum 95 HB</div>
<div class="t " style="left:1359px;top:438px;letter-spacing:0.189px;">Tool: 6.350mm 3FL Carbide None Solid End Mill</div>
<div class="t " style="left:1359px;top:453px;letter-spacing:-0.016px;">Speed: 246.2 SMM/ 12347.1RPM</div>
<div class="t " style="left:1359px;top:468px;letter-spacing:0.180px;">Feed: 0.0503 mm/tooth 0.1509 mm/rev 1862.87 mm/min</div>
<div class="t " style="left:1359px;top:483px;letter-spacing:0.254px;">Chip Thickness: 0.0503 mm</div>
<div class="t " style="left:1359px;top:498px;letter-spacing:0.189px;">Reference Chip load: 0.0503 mm</div>
<div class="t " style="left:1359px;top:513px;letter-spacing:0.170px;">Engagement: DOC=1.66 mm  WOC=6.35 mm</div>
<div class="t " style="left:1359px;top:528px;letter-spacing:0.065px;">Effective Dia: 6.350 mm</div>
<div class="t " style="left:1359px;top:543px;letter-spacing:0.083px;">Cross Section: 0.26 x Dia.</div>
<div class="t " style="left:1359px;top:558px;letter-spacing:0.027px;">Power: 0.4kW</div>
<div class="t " style="left:1359px;top:573px;letter-spacing:0.080px;">MRR: 19.66 cm³</div>
<div class="t " style="left:1359px;top:588px;letter-spacing:0.045px;">Torque: 0.28 N-M</div>
<div class="t " style="left:1359px;top:603px;letter-spacing:-0.026px;">Max Torque: 1.34 N-M</div>
<div class="t " style="left:1359px;top:618px;letter-spacing:0.047px;">Cutting Force: 87.2 N</div>
<div class="t " style="left:1359px;top:633px;letter-spacing:0.166px;">Deflection: 0.02 mm</div>
<div class="t " style="left:1359px;top:648px;letter-spacing:0.040px;">Max Deflection: 0.10 mm</div>
<div class="t " style="left:1359px;top:663px;letter-spacing:0.157px;">Comment: straight  flute</div>
<div class="b" style="left:1354px;top:678px;width:350px;height:4px;overflow:hidden;"><div class="t" style="left:5px;top:0px;">Operation: Compound</div></div>
<div class="b " style="left:1704px;top:422px;width:1px;height:260px;background:#fafafa;"></div>
<div class="b " style="left:1705px;top:439px;width:15px;height:205px;background:#cdcdcd;"></div>
<svg class="b" style="left:1707px;top:427px;" width="11" height="8" viewBox="0 0 11 8"><path d="M2.3 6.3 L5.6 3 L8.9 6.3" fill="none" stroke="#505050" stroke-width="2"/></svg>
<svg class="b" style="left:1707px;top:670px;" width="11" height="8" viewBox="0 0 11 8"><path d="M2.3 1.7 L5.6 5 L8.9 1.7" fill="none" stroke="#505050" stroke-width="2"/></svg>
<div class="b " style="left:10px;top:1017px;width:1735px;height:2px;background:#fff;"></div>
<div class="b " style="left:10px;top:1019px;width:1735px;height:1px;background:#dfdfdf;"></div>
<div class="b " style="left:10px;top:1020px;width:1735px;height:26px;background:#f0f0f0;"></div>
<svg class="b" style="left:22px;top:1022px;" width="22" height="21" viewBox="0 0 22 21"><path d="M10.9 1 L20.8 10.6 H18 V19.8 H4 V10.6 H1.2 L4.2 7.6 V2 H6.9 V4.9 Z" fill="#2c5f2e"/><rect x="8.6" y="11.6" width="5.2" height="5.2" fill="#1e8c2c" stroke="#1f5323" stroke-width="0.9"/></svg>
<svg class="b" style="left:57px;top:1023px;" width="21" height="20" viewBox="0 0 21 20"><path d="M4.6 14 L1 18.4 L3 14.5 Z" fill="#000" stroke="#000" stroke-width="0.8"/><path d="M15.5 15.5 L19 18.8 L17 15 Z" fill="#000" stroke="#000" stroke-width="0.8"/><rect x="1.3" y="1.3" width="14.3" height="13" rx="3" fill="#3cc3fa" stroke="#5f5550" stroke-width="0.9"/><rect x="5.2" y="5.3" width="13.6" height="10.6" rx="3" fill="#87dbfc" stroke="#5f5550" stroke-width="0.9"/></svg>
<svg class="b" style="left:91px;top:1023px;" width="17" height="20" viewBox="0 0 17 20"><path d="M5.4 13.6 L1 18.4 L3.2 13.6 Z" fill="#000" stroke="#000" stroke-width="0.8"/><rect x="1.4" y="1.3" width="14.4" height="12.6" rx="3" fill="#3cc3fa" stroke="#5f5550" stroke-width="0.9"/><path d="M4 6.5 H12.8 M4 8.6 H10.8 M4 10.6 H12.8" stroke="#ffee22" stroke-width="1.1"/></svg>
<svg class="b" style="left:124px;top:1022px;" width="22" height="22" viewBox="0 0 22 22"><defs><linearGradient id="hg" x1="0.1" y1="0.1" x2="0.9" y2="0.9"><stop offset="0" stop-color="#00e8ff"/><stop offset="0.5" stop-color="#10c0fa"/><stop offset="1" stop-color="#0a7df0"/></linearGradient></defs><circle cx="11.1" cy="10.6" r="8.9" fill="url(#hg)" stroke="#2a2222" stroke-width="1.3"/><text x="11.1" y="17.3" font-family="Liberation Sans,Arial,sans-serif" font-weight="bold" font-size="18.5" text-anchor="middle" fill="#000" stroke="#000" stroke-width="0.5">?</text></svg>
<svg class="b" style="left:159px;top:1024px;" width="20" height="19" viewBox="0 0 20 19"><path d="M4.8 6.5 V1.6 H12.6 L15.4 4.4 V6.5 Z" fill="#fff" stroke="#6a6a6a" stroke-width="1.1"/><path d="M12.4 1.8 V4.6 H15.2" fill="none" stroke="#6a6a6a" stroke-width="0.9"/><rect x="1" y="6" width="18" height="8" rx="0.8" fill="#666"/><rect x="2.8" y="7.6" width="2.4" height="1.1" fill="#2ee02e"/><rect x="4.6" y="10.8" width="11" height="6.8" fill="#fff" stroke="#666" stroke-width="1.3"/><path d="M6.4 13.3 H13.8 M6.4 15.4 H13.8" stroke="#777" stroke-width="0.9"/></svg>
<svg class="b" style="left:192px;top:1022px;" width="21" height="22" viewBox="0 0 21 22"><rect x="5.8" y="4.8" width="13" height="15.8" fill="#fff" stroke="#8a8a8a" stroke-width="1.1"/><rect x="5.8" y="4.6" width="13" height="2.2" fill="#777"/><rect x="12.5" y="4.6" width="2.6" height="2.2" fill="#111"/><path d="M16 4.4 L18.6 6.8 M18.6 4.4 L16 6.8" stroke="#e11" stroke-width="1"/><path d="M6 10.2 H18.5 M6 13.3 H18.5 M6 16.4 H18.5 M11 7 V20.5" stroke="#aaa" stroke-width="0.7"/><path d="M7 8.2 H10 M7 11.5 H10 M7 14.6 H10 M7 17.8 H10" stroke="#000" stroke-width="1.5"/><path d="M7.3 8.6 V9.6 M7.3 11.9 V12.9 M7.3 15 V16 M7.3 18.2 V19.2" stroke="#000" stroke-width="1"/><path d="M5.4 0.6 V10.2 M0.6 5.4 H10.2 M2 2 L8.8 8.8 M8.8 2 L2 8.8" stroke="#ffe61a" stroke-width="1.35"/></svg>
<div class="t " style="left:231px;top:1027px;">Input</div>
<div class="b " style="left:264px;top:1024px;width:26px;height:17px;background:#1e90ff;"></div>
<div class="t " style="left:267px;top:1026px;color:#fff;font-size:13px;">mm</div>
<div class="t " style="left:299px;top:1027px;">Result</div>
<div class="b " style="left:339px;top:1024px;width:26px;height:17px;background:#1e90ff;"></div>
<div class="t " style="left:342px;top:1026px;color:#fff;font-size:13px;">mm</div>
<div class="t lk" style="left:377px;top:1027px;letter-spacing:0.062px;">Update HSMAdvisor v1.509 is available</div>
<svg class="b" style="left:604.5px;top:1023.5px;" width="21" height="21" viewBox="0 0 21 21"><defs><linearGradient id="dbt" x1="0" y1="0" x2="1" y2="0"><stop offset="0" stop-color="#c0ff88"/><stop offset="0.42" stop-color="#8cff48"/><stop offset="0.6" stop-color="#12c812"/><stop offset="1" stop-color="#0a5a0a"/></linearGradient><clipPath id="dbc"><path d="M0.5 3 V17 Q10.25 21.5 20 17 V3 Q10.25 -1.5 0.5 3 Z"/></clipPath></defs><g clip-path="url(#dbc)"><rect x="0" y="0" width="21" height="21" fill="#000"/><path d="M0 6.8 Q10.25 9.6 20.5 6.8 M0 10.8 Q10.25 13.6 20.5 10.8 M0 14.8 Q10.25 17.6 20.5 14.8 M0 18 Q10.25 21 20.5 18" stroke="#0ccc0c" stroke-width="1.7" fill="none"/><ellipse cx="10.25" cy="3" rx="9.9" ry="2.9" fill="url(#dbt)"/><rect x="15" y="5" width="5.5" height="15" fill="#e0ffe0" opacity="0.45"/><circle cx="17.4" cy="2.6" r="1.6" fill="#000"/></g></svg>
<div class="b " style="left:638px;top:1022px;width:3px;height:22px;background:#000;border-radius:1.5px;"></div>
<div class="b " style="left:641px;top:1023px;width:17px;height:12px;background:linear-gradient(115deg,#5ab85a 0%,#4a9a44 45%,#3f8f3a 55%,#4fd062 100%);"></div>
<div class="t lk" style="left:673px;top:1027px;letter-spacing:0.074px;">Translate HSMAdvisor</div>
<div class="b " style="left:1743px;top:1039px;width:2px;height:2px;background:#bfbfbf;"></div>
<div class="b " style="left:1740px;top:1042px;width:2px;height:2px;background:#bfbfbf;"></div>
<div class="b " style="left:1743px;top:1042px;width:2px;height:2px;background:#bfbfbf;"></div>
<svg class="b" style="left:0;top:0;" width="1745" height="1051" viewBox="0 0 1745 1051"><path d="M818.4 244.2 C816.2 245.4 809.6 249.5 805.2 251.7 C800.8 253.9 794.9 254.4 792.0 257.5 C789.1 260.6 787.5 266.5 787.6 270.2 C787.8 273.9 788.5 277.3 792.9 279.9 C797.3 282.5 806.1 284.6 814.0 286.0 C821.9 287.4 830.1 288.3 840.4 288.2 C850.7 288.1 860.9 286.4 875.6 285.2 C890.3 284.0 912.3 282.1 928.4 280.8 C944.5 279.5 960.7 278.2 972.4 277.2 C984.1 276.2 993.7 275.6 998.8 274.6 C1003.9 273.6 1003.2 272.3 1003.2 271.1 C1003.2 269.9 1001.9 269.4 998.8 267.6 C995.7 265.8 990.7 262.5 984.8 260.5 C978.9 258.5 974.5 257.1 963.6 255.8 C952.7 254.5 934.3 252.9 919.6 252.6 C904.9 252.3 890.3 253.4 875.6 254.0 C860.9 254.6 845.5 255.5 831.6 256.1 C817.7 256.8 798.6 257.6 792.0 257.9 M975.0 279.9 C976.5 280.1 981.4 279.8 983.9 281.1 C986.4 282.4 987.8 284.3 990.0 287.8 C992.2 291.3 994.6 297.2 997.0 301.9 C999.4 306.6 1002.1 311.2 1004.1 316.0 C1006.1 320.8 1008.7 326.2 1009.0 330.9 C1009.3 335.6 1007.9 339.6 1005.9 344.1 C1003.9 348.7 1000.5 353.9 997.0 358.2 C993.5 362.5 990.4 366.5 984.8 369.7 C979.2 372.9 971.5 375.1 963.6 377.6 C955.7 380.1 948.9 382.0 937.2 384.6 C925.5 387.2 909.3 390.8 893.2 393.4 C877.1 396.0 855.9 398.6 840.4 400.5 C824.9 402.4 811.7 403.1 800.0 404.8 C788.3 406.6 779.2 409.2 770.0 411.0 C760.8 412.8 758.3 412.5 745.0 415.8 C731.7 419.1 708.3 425.9 690.0 430.9 C671.7 435.9 653.3 441.2 635.0 446.0 C616.7 450.8 596.0 456.1 580.0 459.8 C564.0 463.5 548.9 466.2 538.8 468.0 C528.7 469.8 522.8 470.3 519.6 470.8 M414.0 454.0 C418.8 453.7 431.8 452.7 442.5 452.0 C453.2 451.3 469.8 449.7 478.0 449.6 C486.2 449.5 487.8 450.3 492.0 451.5 C496.2 452.7 499.3 454.7 503.0 457.0 C506.7 459.3 510.3 462.1 514.0 465.3 C517.7 468.5 521.3 472.3 525.0 476.0 C528.7 479.7 532.3 483.6 536.0 487.3 C539.7 491.0 544.5 494.6 547.0 498.0 C549.5 501.4 550.2 505.0 550.8 508.0 C551.4 511.0 551.2 513.7 550.6 516.0 C550.0 518.3 549.4 520.2 547.0 521.7 C544.6 523.2 543.3 524.1 536.0 525.3 C528.7 526.5 512.7 528.2 503.0 529.0 C493.3 529.8 486.7 530.3 478.0 530.2 C469.3 530.1 459.0 529.3 450.8 528.6 C442.6 527.9 437.1 527.1 428.8 525.8 C420.6 524.5 408.7 522.5 401.3 520.9 C393.9 519.3 389.1 517.9 384.7 516.0 C380.3 514.1 377.1 511.8 375.0 509.3 C372.9 506.8 372.0 504.0 372.0 501.0 C372.0 498.0 372.9 494.4 375.0 491.4 C377.1 488.4 381.2 485.8 384.7 483.0 C388.2 480.2 391.7 477.6 395.8 474.9 C399.9 472.2 404.9 469.0 409.5 466.7 C414.1 464.4 420.9 462.1 423.2 461.2 M693.0 477.4 C696.7 477.5 706.8 477.6 715.0 477.8 C723.2 478.0 734.4 478.0 742.5 478.8 C750.6 479.6 756.7 480.3 763.6 482.4 C770.5 484.5 778.4 488.7 783.8 491.6 C789.1 494.5 793.2 497.4 795.7 499.8 C798.2 502.2 799.0 504.3 798.5 506.3 C798.0 508.3 796.2 510.4 793.0 511.8 C789.8 513.2 785.3 514.1 779.2 515.0 C773.1 515.9 763.9 517.0 756.3 517.3 C748.7 517.6 741.0 517.2 733.4 516.8 C725.8 516.4 717.6 515.9 710.4 515.0 C703.2 514.1 695.3 512.9 690.3 511.3 C685.3 509.7 682.7 507.4 680.2 505.3 C677.8 503.2 676.1 501.0 675.6 498.9 C675.1 496.8 675.8 494.6 677.0 492.5 C678.2 490.4 680.7 487.8 682.9 486.1 C685.1 484.4 688.0 483.3 690.3 482.4 C692.6 481.5 694.8 481.1 696.7 480.8 C698.6 480.5 700.9 480.8 701.7 480.8" fill="none" stroke="#ff0808" stroke-width="2.1" stroke-linecap="round" stroke-linejoin="round"/></svg>
</body></html>
